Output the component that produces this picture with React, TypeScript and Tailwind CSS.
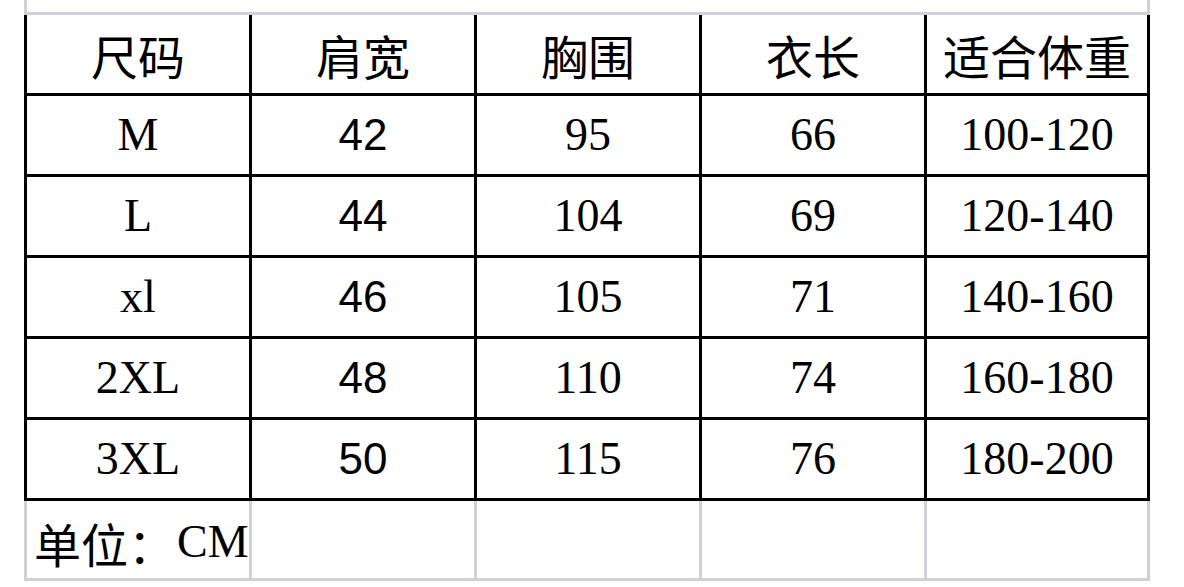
const rows: string[][] = [
  ["M", "42", "95", "66", "100-120"],
  ["L", "44", "104", "69", "120-140"],
  ["xl", "46", "105", "71", "140-160"],
  ["2XL", "48", "110", "74", "160-180"],
  ["3XL", "50", "115", "76", "180-200"],
];

const headers = ["尺码", "肩宽", "胸围", "衣长", "适合体重"];

const cjk = "font-['Noto_Sans_CJK_SC',sans-serif] text-[47px] leading-none";
const serif = "font-['Liberation_Serif',serif] text-[46px] leading-none";
const sans = "font-['Liberation_Sans',sans-serif] text-[44px] leading-none";

const cols = "grid grid-cols-[222px_222px_222px_222px_220px] gap-[3px]";

export default function App() {
  return (
    <div className="w-[1184px] h-[587px] bg-white text-black overflow-hidden">
      <div className="ml-[24px] w-[1126px]">
        {/* sliver of the sheet row above */}
        <div className="h-[12px] border-x-[3px] border-[#d0d0db]" />
        <div className="h-[3px] bg-[#d0d0db]" />

        <div className={`${cols} bg-black px-[3px] pb-[3px]`}>
          {headers.map((h) => (
            <div key={h} className={`h-[78px] bg-white flex items-center justify-center ${cjk}`}>
              {h}
            </div>
          ))}
          {rows.map((r) =>
            r.map((v, i) => (
              <div
                key={r[0] + i}
                className={`h-[78px] bg-white flex items-center justify-center ${i === 1 ? sans : serif}`}
              >
                {v}
              </div>
            ))
          )}
        </div>

        <div className={`${cols} bg-[#d0d0db] px-[3px] pb-[3px]`}>
          <div className="h-[77px] bg-white flex items-center pl-[7px] pt-[5px] whitespace-nowrap">
            <span className={cjk}>单位：</span>
            <span className={`${serif} ml-[2px]`}>CM</span>
          </div>
          <div className="h-[77px] bg-white" />
          <div className="h-[77px] bg-white" />
          <div className="h-[77px] bg-white" />
          <div className="h-[77px] bg-white" />
        </div>
      </div>
    </div>
  );
}
